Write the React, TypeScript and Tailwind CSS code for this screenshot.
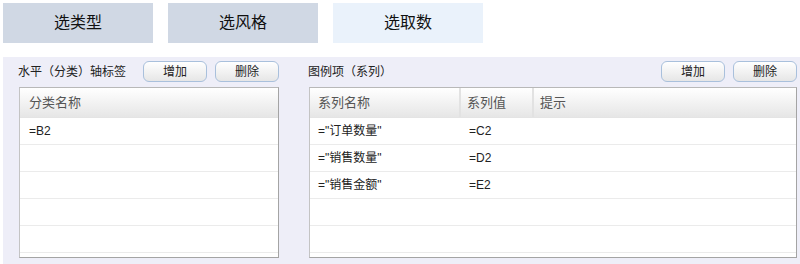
import React from 'react';

const font = { fontFamily: '"Liberation Sans", "Noto Sans CJK SC", sans-serif' };

const tabs = [
  { label: '选类型', active: false },
  { label: '选风格', active: false },
  { label: '选取数', active: true },
];

const Btn: React.FC<{ label: string }> = ({ label }) => (
  <button className="w-[64px] h-[21px] rounded-[6px] border border-[#a9c0dc] bg-gradient-to-b from-white to-[#e6e6e6] text-[12px] leading-none text-[#222]">
    {label}
  </button>
);

const series = [
  { name: '="订单数量"', value: '=C2' },
  { name: '="销售数量"', value: '=D2' },
  { name: '="销售金额"', value: '=E2' },
  { name: '', value: '' },
  { name: '', value: '' },
];

const App: React.FC = () => {
  return (
    <div className="w-[800px] h-[264px] bg-white overflow-hidden" style={font}>
      {/* Tabs */}
      <div className="flex gap-[15px] pl-[3px] pt-[3px]">
        {tabs.map((t) => (
          <div
            key={t.label}
            className={`w-[150px] h-[40px] flex items-center justify-center text-[16px] text-[#111] ${
              t.active ? 'bg-[#eaf2fb]' : 'bg-[#d0d8e4]'
            }`}
          >
            {t.label}
          </div>
        ))}
      </div>

      {/* Panel */}
      <div className="ml-[3px] mt-[14px] h-[207px] bg-[#eeeef8] flex pl-[16px] pr-[3px] pt-[4px] gap-[30px]">
        {/* Category axis */}
        <div className="w-[260px] flex flex-col">
          <div className="h-[21px] flex items-center justify-between">
            <span className="text-[12px] text-[#222] -ml-[1px]">水平（分类）轴标签</span>
            <div className="flex gap-[8px]">
              <Btn label="增加" />
              <Btn label="删除" />
            </div>
          </div>
          <div className="mt-[5px] h-[171px] bg-white border border-[#a4a4a4] border-l-[#c4c4c4] border-t-[#b8b8b8] overflow-hidden">
            <div className="h-[30px] flex items-center px-[9px] text-[13px] text-[#555] bg-gradient-to-b from-white to-[#e6e6e6] border-b border-[#e4e4e4]">
              分类名称
            </div>
            <div className="h-[27px] flex items-center px-[9px] text-[12px] text-[#222] border-b border-[#ebebeb]">=B2</div>
            <div className="h-[27px] border-b border-[#ebebeb]" />
            <div className="h-[27px] border-b border-[#ebebeb]" />
            <div className="h-[27px] border-b border-[#ebebeb]" />
            <div className="h-[27px] border-b border-[#ebebeb]" />
          </div>
        </div>

        {/* Legend series */}
        <div className="w-[488px] flex flex-col">
          <div className="h-[21px] flex items-center justify-between">
            <span className="text-[12px] text-[#222] -ml-[1px]">图例项（系列）</span>
            <div className="flex gap-[8px]">
              <Btn label="增加" />
              <Btn label="删除" />
            </div>
          </div>
          <div className="mt-[5px] h-[171px] bg-white border border-[#a4a4a4] border-l-[#c4c4c4] border-t-[#b8b8b8] overflow-hidden">
            <div className="h-[30px] flex text-[13px] text-[#555] bg-gradient-to-b from-white to-[#e6e6e6] border-b border-[#e4e4e4]">
              <div className="w-[151px] flex items-center px-[8px] border-r-2 border-[#e2e2e2]">系列名称</div>
              <div className="w-[73px] flex items-center px-[6px] border-r-2 border-[#e2e2e2]">系列值</div>
              <div className="flex-1 flex items-center px-[6px]">提示</div>
            </div>
            {series.map((s, i) => (
              <div key={i} className="h-[27px] flex text-[12px] text-[#222] border-b border-[#ebebeb]">
                <div className="w-[151px] flex items-center px-[8px]">{s.name}</div>
                <div className="w-[73px] flex items-center px-[8px]">{s.value}</div>
                <div className="flex-1" />
              </div>
            ))}
          </div>
        </div>
      </div>
    </div>
  );
};

export default App;
